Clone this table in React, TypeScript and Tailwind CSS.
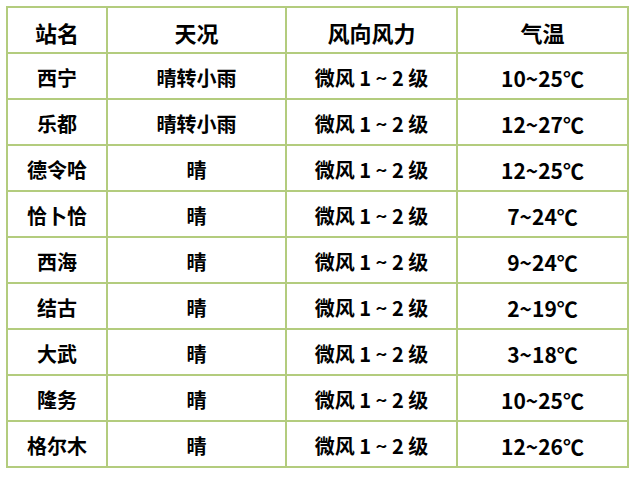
import React from "react";

const rows: [string, string, string][] = [
  ["西宁", "晴转小雨", "10~25℃"],
  ["乐都", "晴转小雨", "12~27℃"],
  ["德令哈", "晴", "12~25℃"],
  ["恰卜恰", "晴", "7~24℃"],
  ["西海", "晴", "9~24℃"],
  ["结古", "晴", "2~19℃"],
  ["大武", "晴", "3~18℃"],
  ["隆务", "晴", "10~25℃"],
  ["格尔木", "晴", "12~26℃"],
];

const cell = "border-2 border-[#b3cc7e] text-center align-middle px-0 pt-[4px] pb-0 h-[46px]";

export default function App() {
  return (
    <div
      className="w-[640px] h-[480px] bg-white pt-[6px] pl-[6px]"
      style={{ fontFamily: '"Noto Sans CJK SC", "Noto Sans", sans-serif' }}
    >
      <table className="table-fixed border-collapse w-[621px] border-2 border-[#9bbb59] text-black font-bold">
        <colgroup>
          <col className="w-[100px]" />
          <col className="w-[179px]" />
          <col className="w-[171px]" />
          <col className="w-[171px]" />
        </colgroup>
        <thead>
          <tr className="text-[22px] leading-none">
            <th className={cell}>站名</th>
            <th className={cell}>天况</th>
            <th className={cell}>风向风力</th>
            <th className={cell}>气温</th>
          </tr>
        </thead>
        <tbody>
          {rows.map((r) => (
            <tr key={r[0]} className="text-[20px] leading-none">
              <td className={cell}>{r[0]}</td>
              <td className={cell}>{r[1]}</td>
              <td className={cell}>微风 1 ~ 2 级</td>
              <td className={cell + " text-[21px]"}>{r[2]}</td>
            </tr>
          ))}
        </tbody>
      </table>
    </div>
  );
}
